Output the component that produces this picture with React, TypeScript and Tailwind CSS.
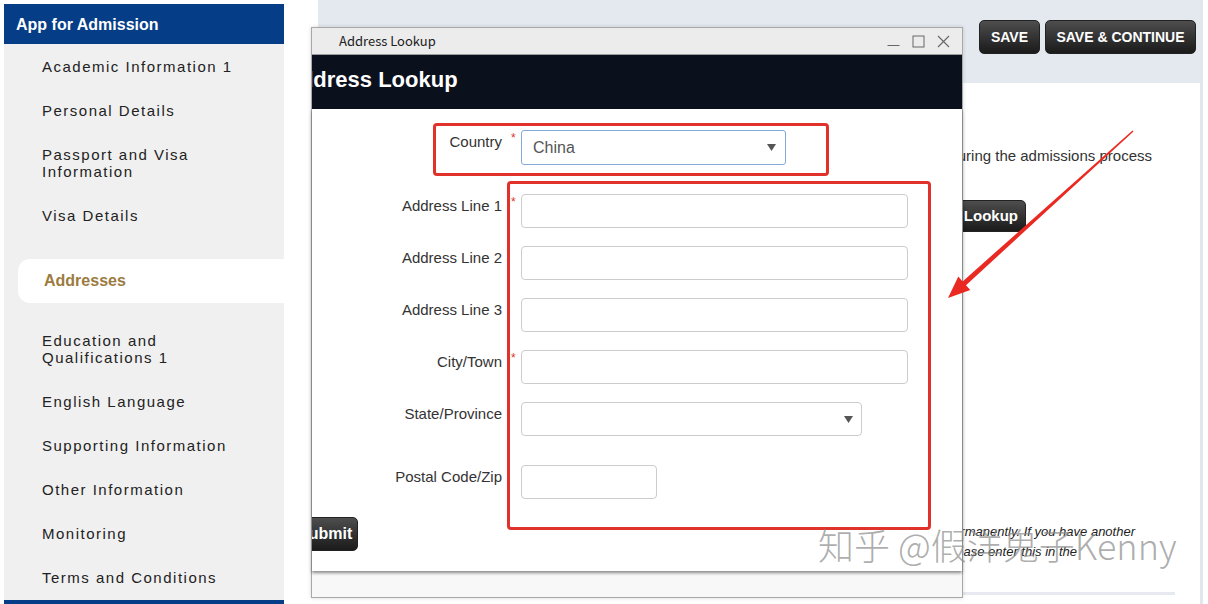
import React from 'react';

// Itens do menu lateral (altura de cada linha em px)
const NAV_TOP = [
  { label: 'Academic Information 1', h: 'h-[44px]' },
  { label: 'Personal Details', h: 'h-[44px]' },
  { label: 'Passport and Visa Information', h: 'h-[61px]' },
  { label: 'Visa Details', h: 'h-[44px]' },
];

const NAV_BOTTOM = [
  { label: 'Education and Qualifications 1', h: 'h-[61px]' },
  { label: 'English Language', h: 'h-[44px]' },
  { label: 'Supporting Information', h: 'h-[44px]' },
  { label: 'Other Information', h: 'h-[44px]' },
  { label: 'Monitoring', h: 'h-[44px]' },
  { label: 'Terms and Conditions', h: 'h-[44px]' },
];

const Caret = () => (
  <svg width="9" height="7" viewBox="0 0 9 7">
    <path d="M0 0 L9 0 L4.5 7 Z" fill="#555" />
  </svg>
);

const NavItem: React.FC<{ label: string; h: string }> = ({ label, h }) => (
  <div className={`${h} flex items-center pl-[38px]`}>
    <span className="max-w-[200px] text-[15px] leading-[17px] tracking-[1.5px] text-[#222]">{label}</span>
  </div>
);

const Sidebar = () => (
  <aside className="ml-[4px] mt-[4px] w-[280px] h-[600px] bg-[#f0f0f0] flex flex-col shrink-0">
    <div className="h-[40px] bg-[#053d86] flex items-center pl-[12px] pt-[2px] text-white font-bold text-[16px]">
      App for Admission
    </div>
    {NAV_TOP.map((n) => (
      <NavItem key={n.label} {...n} />
    ))}
    <div className="mt-[22px] mb-[15px] ml-[14px] h-[44px] bg-white rounded-l-[12px] flex items-center pl-[26px] text-[16px] font-bold text-[#9c7b3f]">
      Addresses
    </div>
    {NAV_BOTTOM.map((n) => (
      <NavItem key={n.label} {...n} />
    ))}
    <div className="mt-auto h-[4px] bg-[#053d86]" />
  </aside>
);

const DarkButton: React.FC<{ children: React.ReactNode; className?: string }> = ({ children, className = '' }) => (
  <div
    className={`bg-linear-to-b from-[#4e4e4e] to-[#1b1b1b] border border-[#222] text-white font-bold flex items-center justify-center ${className}`}
  >
    {children}
  </div>
);

const MainPanel = () => (
  <main className="ml-[34px] w-[885px] h-[604px] border-r-[3px] border-[#e2e7ee] flex flex-col shrink-0">
    <div className="h-[83px] bg-[#e4e9f0] flex justify-end items-start pt-[20px] pr-[4px] gap-[5px]">
      <DarkButton className="w-[61px] h-[34px] rounded-[5px] text-[14px]">SAVE</DarkButton>
      <DarkButton className="w-[151px] h-[34px] rounded-[5px] text-[14px]">SAVE &amp; CONTINUE</DarkButton>
    </div>
    <div className="mt-[64px] pr-[48px] text-right whitespace-nowrap text-[15px] leading-[17px] text-[#333]">
      Please provide the address where you will be living during the admissions process
    </div>
    <div className="mt-[36px] flex justify-end pr-[174px]">
      <DarkButton className="h-[32px] px-[7px] rounded-[5px] text-[15px]">Address Lookup</DarkButton>
    </div>
    <div className="mt-[290px] pr-[65px] text-right whitespace-nowrap italic text-[13px] leading-[20px] text-[#222]">
      This should be the address where you live permanently. If you have another
    </div>
    <div className="pr-[123px] text-right whitespace-nowrap italic text-[13px] leading-[20px] text-[#222]">
      correspondence address please enter this in the
    </div>
    <div className="mt-[30px] mr-[25px] h-[3px] bg-[#e6eaf0]" />
  </main>
);

const FieldRow: React.FC<{ label: string; required?: boolean; children: React.ReactNode; className?: string }> = ({
  label,
  required,
  children,
  className = '',
}) => (
  <div className={`flex items-start ${className}`}>
    <div className="w-[190px] text-right pt-[3px] text-[15px] leading-[17px] text-[#333]">{label}</div>
    <div className="w-[19px] pl-[9px] pt-[2px] text-[12px] leading-[12px] text-[#d9362c]">{required ? '*' : ''}</div>
    {children}
  </div>
);

const TextInput: React.FC<{ w: string }> = ({ w }) => (
  <div className={`${w} h-[34px] border border-[#cccccc] rounded-[4px] bg-white`} />
);

const Dialog = () => (
  <div className="absolute z-10 left-[311px] top-[27px] w-[652px] h-[571px] border border-[#a8a8a8] bg-[#f7f7f7] flex flex-col shadow-[0_0_4px_rgba(0,0,0,0.15)]">
    {/* barra de título da janela */}
    <div className="h-[27px] bg-[#ececec] border-b border-[#9c9c9c] flex items-center pl-[27px] pr-[12px]">
      <span className="text-[13px] text-[#222] font-['Noto_Sans_CJK_SC',sans-serif]">Address Lookup</span>
      <div className="ml-auto flex items-center gap-[12px]">
        <svg width="13" height="13" viewBox="0 0 13 13">
          <path d="M0.5 10.5 H12.5" stroke="#666" strokeWidth="1" />
        </svg>
        <svg width="13" height="13" viewBox="0 0 13 13">
          <rect x="1" y="1" width="11" height="11" fill="none" stroke="#666" strokeWidth="1" />
        </svg>
        <svg width="13" height="13" viewBox="0 0 13 13">
          <path d="M1 1 L12 12 M12 1 L1 12" stroke="#666" strokeWidth="1.1" />
        </svg>
      </div>
    </div>
    <div className="h-[54px] bg-[#0b101d] overflow-hidden flex items-center pb-[4px]">
      <h1 className="-ml-[28px] whitespace-nowrap text-white font-bold text-[22px] leading-none">Address Lookup</h1>
    </div>
    <div className="h-[462px] bg-white overflow-hidden flex flex-col pt-[21px] shadow-[0_2px_3px_rgba(0,0,0,0.45)] relative">
      <FieldRow label="Country" required>
        <div className="w-[265px] h-[35px] border border-[#83a9da] rounded-[3px] flex items-center justify-between pl-[11px] pr-[9px]">
          <span className="text-[16px] text-[#555]">China</span>
          <Caret />
        </div>
      </FieldRow>
      <FieldRow label="Address Line 1" required className="mt-[29px]">
        <TextInput w="w-[387px]" />
      </FieldRow>
      <FieldRow label="Address Line 2" className="mt-[18px]">
        <TextInput w="w-[387px]" />
      </FieldRow>
      <FieldRow label="Address Line 3" className="mt-[18px]">
        <TextInput w="w-[387px]" />
      </FieldRow>
      <FieldRow label="City/Town" required className="mt-[18px]">
        <TextInput w="w-[387px]" />
      </FieldRow>
      <FieldRow label="State/Province" className="mt-[18px]">
        <div className="w-[341px] h-[34px] border border-[#cccccc] rounded-[4px] flex items-center justify-end pr-[8px]">
          <Caret />
        </div>
      </FieldRow>
      <FieldRow label="Postal Code/Zip" className="mt-[29px]">
        <TextInput w="w-[136px]" />
      </FieldRow>
      <div className="mt-[18px] flex">
        <DarkButton className="-ml-[23px] h-[34px] pl-[8px] pr-[5px] rounded-[5px] text-[16px]">Submit</DarkButton>
      </div>
    </div>
    <div className="flex-1 bg-[#f8f8f8]" />
  </div>
);

const Annotations = () => (
  <div className="absolute inset-0 z-20 pointer-events-none">
    <div className="absolute left-[433px] top-[123px] w-[396px] h-[53px] border-[3px] border-[#e0312a] rounded-[4px]" />
    <div className="absolute left-[507px] top-[181px] w-[424px] h-[349px] border-[3px] border-[#e0312a] rounded-[4px]" />
    <svg className="absolute left-0 top-0" width="1208" height="604" viewBox="0 0 1208 604">
      <polygon
        points="1133.5,131.6 966,285.2 970.3,290 948,298 958.3,276.6 962.6,281.4 1132.5,130.4"
        fill="#ea2a22"
      />
    </svg>
    <div className="absolute left-[818px] top-[526px] whitespace-nowrap text-[36px] leading-none font-light text-[#8a8a8a]/70 font-['Noto_Sans_CJK_SC',sans-serif]">
      知乎 @假洋鬼子Kenny
    </div>
  </div>
);

export default function App() {
  return (
    <div className="relative w-[1208px] h-[604px] overflow-hidden bg-white flex font-['Liberation_Sans',Arial,sans-serif]">
      <Sidebar />
      <MainPanel />
      <Dialog />
      <Annotations />
    </div>
  );
}
